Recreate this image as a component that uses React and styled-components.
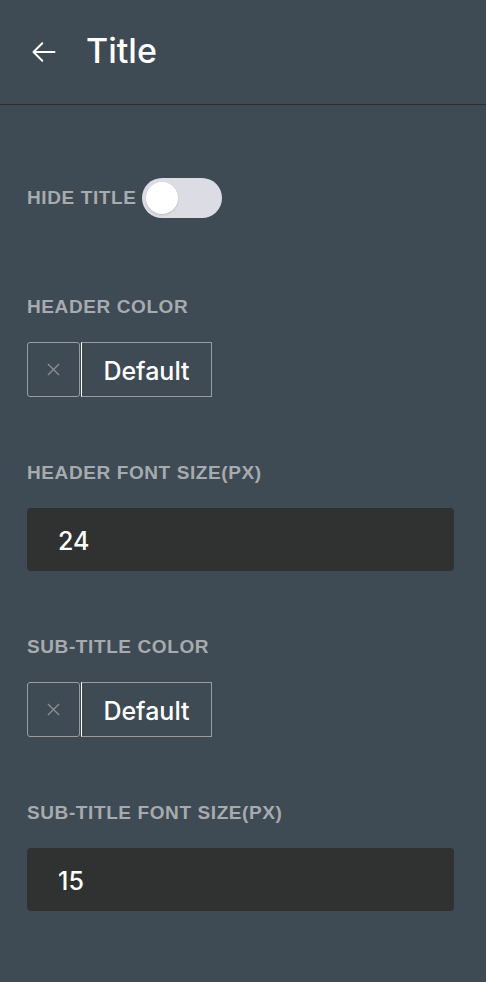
import React, {useState} from 'react'
import styled, {createGlobalStyle} from 'styled-components'

const Global = createGlobalStyle`
html, body {
  margin:0;
  padding:0;
  background:#3e4a54;
}
body {
  font-family:"Liberation Sans", Arial, sans-serif;
  -webkit-font-smoothing:antialiased;
}
`
const Page = styled.div`
width:486px;
min-height:982px;
background:#3e4a54;
color:#fff;
`
const Header = styled.header`
height:104px;
display:flex;
align-items:center;
padding:0 0 0 30px;
border-bottom:1px solid #2b2f31;
`
const Back = styled.button`
background:none;
border:0;
padding:0;
margin:0 28px 0 0;
display:flex;
align-items:center;
cursor:pointer;
svg{
  width:28px;
  height:28px;
}
`
const HeaderTitle = styled.h1`
margin:0;
font-family:Inter, "Liberation Sans", sans-serif;
font-size:34px;
font-weight:500;
line-height:1;
color:#fff;
padding-bottom:2px;
`
const Body = styled.div`
padding:73px 32px 40px 27px;
display:flex;
flex-direction:column;
`
const Field = styled.div`
display:flex;
flex-direction:column;
gap:24px;
margin-bottom:${props => props.last ? '0' : '65px'};
`
const Label = styled.label`
font-size:19px;
line-height:22px;
font-weight:700;
color:#a7abaf;
text-transform:uppercase;
letter-spacing:0.6px;
`
const ToggleRow = styled.div`
display:flex;
align-items:center;
gap:6px;
margin-bottom:78px;
`
const Track = styled.button`
width:80px;
height:40px;
border-radius:20px;
border:0;
padding:0 4px;
background:#dcdde4;
display:flex;
align-items:center;
justify-content:${props => props.on ? 'flex-end' : 'flex-start'};
cursor:pointer;
`
const Knob = styled.span`
width:32px;
height:32px;
border-radius:50%;
background:#fff;
box-shadow:0 1px 2px rgba(0,0,0,0.15);
`
const Picker = styled.div`
display:flex;
align-items:stretch;
height:55px;
`
const Clear = styled.button`
width:53px;
background:transparent;
border:1px solid #9a9c9e;
border-radius:3px;
display:flex;
align-items:center;
justify-content:center;
padding:0;
cursor:pointer;
svg{
  width:13px;
  height:13px;
}
`
const Swatch = styled.div`
width:131px;
box-sizing:border-box;
border:1px solid #9a9c9e;
border-left:1px solid #fff;
margin-left:1px;
display:flex;
align-items:center;
justify-content:center;
font-family:Inter, "Liberation Sans", sans-serif;
font-size:25px;
font-weight:500;
color:#fff;
padding-top:3px;
`
const Input = styled.input`
height:63px;
box-sizing:border-box;
width:100%;
background:#303231;
border:0;
border-radius:4px;
padding:3px 0 0 31px;
font-family:Inter, "Liberation Sans", sans-serif;
font-size:25px;
font-weight:500;
color:#fff;
outline:none;
`

const ArrowLeft = () => (
  <svg viewBox="0 0 24 24" fill="none" stroke="#fff" strokeWidth="1.7" strokeLinecap="round" strokeLinejoin="round">
    <path d="M21 12H3.5" />
    <path d="M10.5 4.5L3 12l7.5 7.5" />
  </svg>
)

const Cross = () => (
  <svg viewBox="0 0 14 14" fill="none" stroke="#8b8f93" strokeWidth="1.4">
    <path d="M1 1l12 12M13 1L1 13" />
  </svg>
)

const ColorField = ({label}) => (
  <Field>
    <Label>{label}</Label>
    <Picker>
      <Clear><Cross /></Clear>
      <Swatch>Default</Swatch>
    </Picker>
  </Field>
)

const SizeField = ({label, value, last}) => {
  const [val, setVal] = useState(value)
  return (
    <Field last={last}>
      <Label>{label}</Label>
      <Input value={val} onChange={e => setVal(e.target.value)} />
    </Field>
  )
}

const App = () => {
  const [hide, setHide] = useState(false)
  return (
    <Page>
      <Global />
      <Header>
        <Back><ArrowLeft /></Back>
        <HeaderTitle>Title</HeaderTitle>
      </Header>
      <Body>
        <ToggleRow>
          <Label>Hide title</Label>
          <Track on={hide ? 1 : 0} onClick={() => setHide(!hide)}><Knob /></Track>
        </ToggleRow>
        <ColorField label="Header color" />
        <SizeField label="Header font size(px)" value="24" />
        <ColorField label="Sub-title color" />
        <SizeField label="Sub-title font size(px)" value="15" last />
      </Body>
    </Page>
  )
}

export default App
